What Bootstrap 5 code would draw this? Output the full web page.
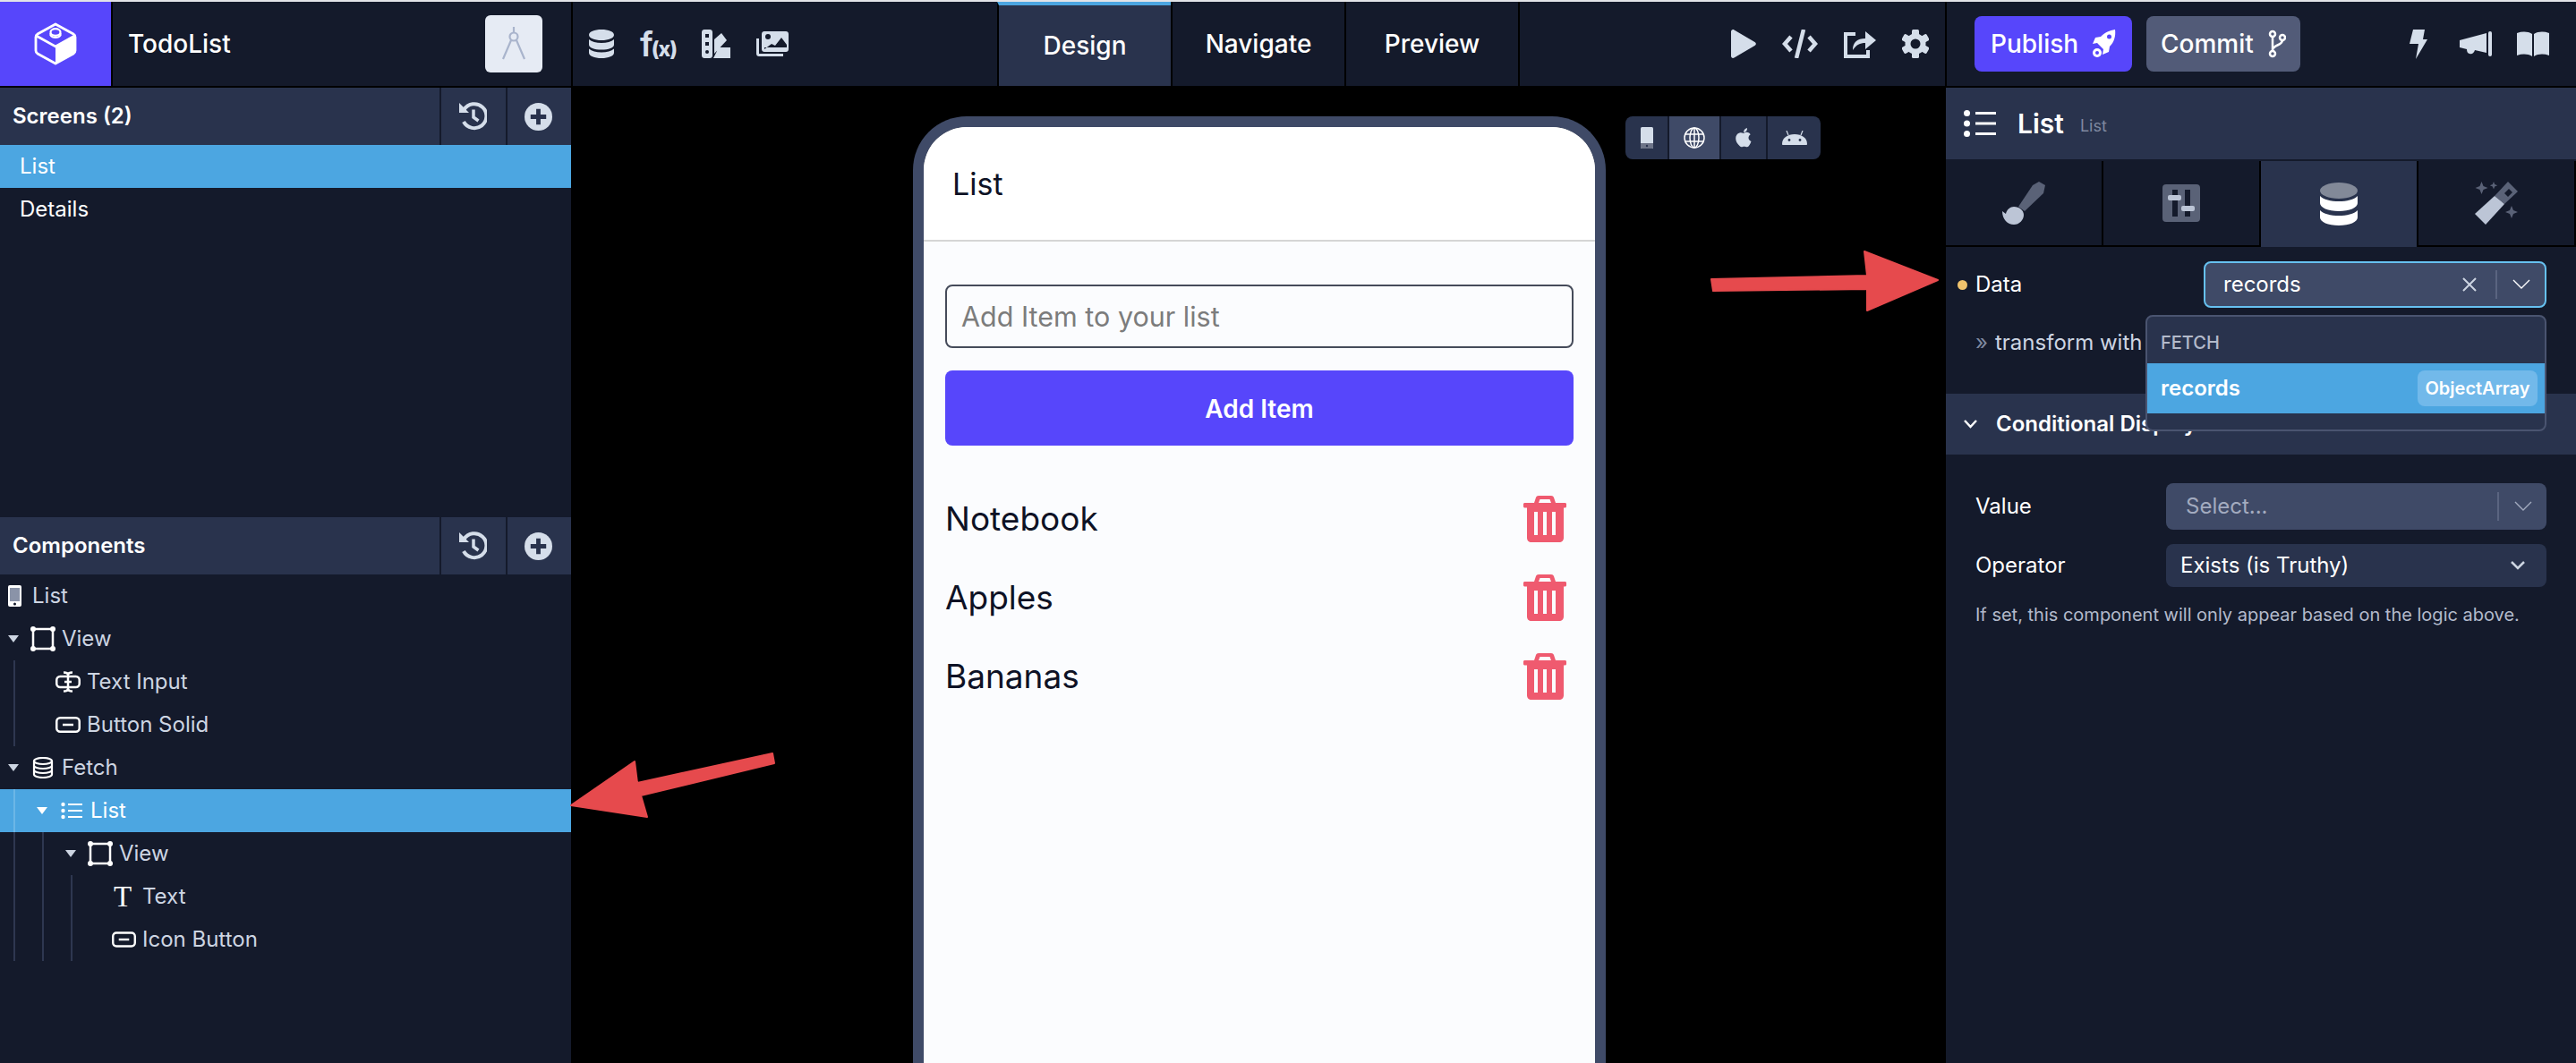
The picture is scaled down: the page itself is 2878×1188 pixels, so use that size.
<!DOCTYPE html>
<html lang="en">
<head>
    <meta charset="UTF-8">
    <title>TodoList</title>
    <link href="https://cdn.jsdelivr.net/npm/bootstrap@5.3.0/dist/css/bootstrap.min.css" rel="stylesheet">
    <style>
        html, body { height: 100%; }
        body { background: #000; color: #fff; font-family: Inter, "Noto Sans", sans-serif; font-size: 24px; overflow: hidden; border-top: 2px solid #e3e4e8; position: relative; }
        svg { display: block; flex: none; }

        /* top bar */
        .topbar { height: 94px; background: #141a2b; }
        .logo-box { width: 124px; background: #5746fb; }
        .project { width: 514px; border-left: 2px solid #000; padding: 0 32px 0 17px; font-size: 28px; font-weight: 500; }
        .compass-btn { width: 64px; height: 64px; background: #e6ebf4; border-radius: 6px; }
        .tool-icons { width: 476px; border-left: 2px solid #000; padding-left: 18px; gap: 29px; color: #d5deea; }
        .fx { font-weight: 700; line-height: 1; width: 40px; white-space: nowrap; }
        .fx b { font-size: 38px; font-weight: 600; letter-spacing: -2px; }
        .fx i { font-size: 23px; font-style: normal; font-weight: 800; letter-spacing: -1px; }
        .mode-tab { width: 194px; border-left: 2px solid #000; font-size: 28px; font-weight: 500; color: #fff; text-decoration: none; }
        .mode-tab:hover { color: #fff; }
        .mode-tab.on { background: #29334d; border-top: 4px solid #4ca6e1; }
        .run-icons { flex: 1; border-left: 2px solid #000; padding-right: 18px; gap: 29px; color: #d5deea; }
        .pub-area { width: 705px; border-left: 2px solid #000; padding: 0 30px 0 31px; color: #d5deea; }
        .top-btn { height: 62px; border: 0; border-radius: 8px; color: #fff; font-size: 28px; font-weight: 500; padding: 0 18px; margin-right: 16px; }
        .btn-pub { width: 176px; background: #5746fb; }
        .btn-com { width: 172px; background: #525b78; padding: 0 16px; }
        .btn-pub:hover { background: #5746fb; color: #fff; }
        .btn-com:hover { background: #525b78; color: #fff; }
        .side-tools { gap: 28px; }
        .bolt-gap { margin-right: 8px; }

        /* main columns */
        .workspace { margin-top: 2px; height: 1090px; }
        .left-col { width: 638px; background: #141a2b; }
        .screens-part { height: 480px; }
        .pane-head { height: 64px; background: #29334d; font-weight: 600; padding-left: 14px; }
        .pane-btn { width: 74px; height: 64px; border-left: 2px solid #141a2b; color: #d5deea; padding-right: 2px; }
        .pane-btn.last { width: 73px; }
        .screen-list .list-group-item { height: 48px; background: transparent; border: 0; border-radius: 0; color: #fff; padding: 0 0 0 22px; display: flex; align-items: center; }
        .screen-list .list-group-item.active { background: #4ca6e1; }

        .tree-row { height: 48px; position: relative; color: #cdd5e2; }
        .tree-row.sel { background: #4ca6e1; color: #fff; }
        .guide { position: absolute; top: 0; bottom: 0; width: 2px; background: #2e3750; }
        .sel .guide { background: #6cb6e6; }
        .g1 { left: 15px; } .g2 { left: 47px; } .g3 { left: 79px; }
        .dp0 { padding-left: 9px; } .dp1 { padding-left: 41px; } .dp2 { padding-left: 73px; }
        .lf1 { padding-left: 62px; } .lf2 { padding-left: 125px; }
        .caret-mark { margin-right: 13px; }
        .tree-ico { margin-right: 7px; color: #fff; }
        .serif-t { font-family: "Liberation Serif", serif; font-size: 33px; line-height: 1; width: 27px; padding-left: 2px; color: #fff; margin-right: 7px; }

        .canvas { width: 1536px; padding: 32px 0 0 2px; }
        .phone { width: 774px; height: 1100px; border: 12px solid #3f4a67; border-bottom: 0; border-radius: 60px 60px 0 0; position: relative; }
        .phone-in { height: 100%; background: #fbfcfe; border-radius: 48px 48px 0 0; overflow: hidden; color: #0e1225; }
        .phone-head { height: 128px; background: #fff; border-bottom: 2px solid #d5d5d5; padding-left: 32px; font-size: 34px; }
        .phone-body { padding: 48px 24px 0; }
        .phone-input { height: 71px; border: 2px solid #454b5a; border-radius: 8px; background: transparent; font-size: 30.500px; padding: 0 16px; color: #333; }
        .phone-input::placeholder { color: #7c7c7c; }
        .phone-input:focus { background: transparent; border-color: #454b5a; box-shadow: none; }
        .add-btn { height: 84px; margin-top: 25px; padding-top: 8px; background: #5746fb; border: 0; border-radius: 8px; color: #fff; font-size: 28px; font-weight: 600; }
        .add-btn:hover { background: #5746fb; color: #fff; }
        .todo-row { height: 88px; font-size: 37px; padding-right: 8px; }
        .todo-first { margin-top: 38px; }
        .trash-ico { color: #ef5a6f; }
        .platform { position: absolute; left: calc(100% + 34px); top: -12px; height: 48px; width: 218px; background: #29334d; border-radius: 8px; overflow: hidden; color: #d5deea; }
        .plat-item { height: 48px; border-left: 2px solid #141a2b; }
        .plat-item.on { background: #3f4a67; color: #fff; }
        .p-a { width: 47px; border-left: 0; } .p-b { width: 58px; } .p-c { width: 52px; } .p-d { width: 61px; }

        .right-col { width: 704px; background: #141a2b; }
        .prop-head { height: 80px; background: #29334d; padding-left: 20px; font-size: 30px; font-weight: 600; }
        .prop-sub { font-size: 18px; font-weight: 400; color: #7f89a0; margin-left: 18px; margin-top: 4px; }
        .prop-tabs { margin-top: 2px; height: 96px; }
        .prop-tab { width: 176px; border-right: 2px solid #000; border-bottom: 2px solid #000; height: 96px; }
        .prop-tab.on { background: #29334d; border-bottom: 0; }
        .prop-form { padding: 16px 33px 0 13px; }
        .prop-form, .cond-body { font-size: 24px; }
        .dot-mark { width: 11px; height: 11px; border-radius: 50%; background: #f0c36d; margin-right: 9px; }
        .data-row { height: 52px; }
        .select-shell { position: relative; height: 52px; background: #3f4a67; border-radius: 8px; color: #fff; }
        .select-data { width: 383px; border: 2px solid #66c1f0; padding-left: 20px; }
        .select-wide { width: 425px; padding-left: 22px; color: #a3abbf; }
        .select-plain { width: 425px; height: 48px; background: #29334d; padding-left: 16px; }
        .sel-sep { width: 2px; height: 32px; background: #5a6480; margin: 0 17px 0 21px; }
        .sel-x { color: #cdd5e2; }
        .transform-row { padding: 23px 0 41px 20px; line-height: 32px; color: #cdd5e2; }
        .transform-row span { color: #7f89a0; margin-right: 8px; }
        .pick-menu { display: block; position: absolute; right: -2px; top: 58px; width: 448px; height: 130px; min-width: 0; margin: 0; padding: 0; background: #29334d; border: 2px solid #4a5470; border-radius: 8px; overflow: hidden; font-size: 24px; color: #fff; z-index: 5; }
        .pick-label { height: 52px; padding: 6px 0 0 15px; font-size: 20px; font-weight: 500; color: #b3bacb; }
        .pick-item { height: 56px; background: #4ca6e1; padding: 0 8px 0 15px; font-weight: 600; color: #fff; }
        .pick-badge { width: 134px; height: 40px; background: #72b9ea; border-radius: 8px; font-size: 20px; font-weight: 600; }
        .cond-head { height: 68px; background: #29334d; padding-left: 20px; font-weight: 600; }
        .cond-head svg { margin-right: 21px; }
        .cond-body { padding: 32px 33px 0; }
        .cond-row { margin-bottom: 16px; }
        .help-line { font-size: 20px; line-height: 30px; color: #b3bacb; white-space: nowrap; }

        .arrows { position: absolute; left: 0; top: -2px; pointer-events: none; z-index: 10; }
    </style>
</head>
<body>

<svg class="d-none">
    <symbol id="i-db" viewBox="0 0 28 32"><path d="M0 6C0 2.500 6 0 14 0s14 2.500 14 6-6 6-14 6S0 9.500 0 6zM0 11c3 2.800 8 4 14 4s11-1.200 14-4v6c0 3.300-6 5.600-14 5.600S0 20.300 0 17zM0 21.500c3 2.800 8 4 14 4s11-1.200 14-4V26c0 3.500-6 6-14 6S0 29.500 0 26z" fill="currentColor"/></symbol>
    <symbol id="i-history" viewBox="0 0 32 32"><path d="M6.500 8.500A13.500 13.500 0 1 1 6 22" fill="none" stroke="currentColor" stroke-width="4"/><path d="M1 1l11 11H1z" fill="currentColor"/><path d="M17 8.500V17l5.500 4" fill="none" stroke="currentColor" stroke-width="3.500"/></symbol>
    <symbol id="i-plus" viewBox="0 0 32 32"><circle cx="16" cy="16" r="16" fill="#d5deea"/><path d="M16 7v18M7 16h18" stroke="#29334d" stroke-width="5"/></symbol>
    <symbol id="i-view" viewBox="0 0 28 28"><rect x="3" y="3" width="22" height="22" fill="none" stroke="currentColor" stroke-width="2.500"/><g fill="currentColor"><circle cx="3" cy="3" r="3"/><circle cx="25" cy="3" r="3"/><circle cx="3" cy="25" r="3"/><circle cx="25" cy="25" r="3"/></g></symbol>
    <symbol id="i-button" viewBox="0 0 28 18"><rect x="1.250" y="1.250" width="25.500" height="15.500" rx="4" fill="none" stroke="currentColor" stroke-width="2.500"/><path d="M8 9h12" stroke="currentColor" stroke-width="2.500"/></symbol>
    <symbol id="i-list" viewBox="0 0 36 30"><g fill="currentColor"><circle cx="3.500" cy="3.500" r="3.500"/><circle cx="3.500" cy="15" r="3.500"/><circle cx="3.500" cy="26.500" r="3.500"/></g><path d="M13 3.500h23M13 15h23M13 26.500h23" stroke="currentColor" stroke-width="3"/></symbol>
    <symbol id="i-caret" viewBox="0 0 12 8"><path d="M0 0h12L6 8z" fill="currentColor"/></symbol>
    <symbol id="i-chev" viewBox="0 0 20 12"><path d="M1 1l9 9 9-9" fill="none" stroke="currentColor" stroke-width="1.400"/></symbol>
    <symbol id="i-trash" viewBox="0 0 48 52"><path d="M0 9.500C0 8.400 1 8 2 8h10l2-6c.4-1.200 1.500-2 3-2h14c1.500 0 2.600.800 3 2l2 6h10c1 0 2 .4 2 1.500V12c0 1-1 1.500-2 1.500h-1V47c0 3-2 5-5 5H9c-3 0-5-2-5-5V13.500H2c-1 0-2-.500-2-1.500zM17 8h14l-1.500-4h-11z" fill="currentColor" fill-rule="evenodd"/><path d="M14 18v26M24 18v26M34 18v26" stroke="#fbfcfe" stroke-width="4"/></symbol>
</svg>

<!-- top bar -->
<header class="topbar d-flex">
    <div class="logo-box d-flex align-items-center justify-content-center">
        <svg width="48" height="48" viewBox="0 0 48 48" fill="none">
            <path d="M24 2L44 13c1.600.9 2 1.700 2 3.500v15c0 1.800-.4 2.600-2 3.500L24 46 4 35c-1.600-.9-2-1.700-2-3.500v-15c0-1.800.4-2.600 2-3.500z" stroke="#fff" stroke-width="2.800" stroke-linejoin="round"/>
            <path d="M2.500 15L24 27l21.500-12" stroke="#fff" stroke-width="2.800"/>
            <path d="M24 27l21-12v17c0 1.500-.5 2.300-2 3L24 46z" fill="#fff"/>
            <ellipse cx="24" cy="11" rx="5.500" ry="3.800" stroke="#fff" stroke-width="2.200"/>
            <path d="M18.500 12v2.500c1 1.600 3.200 2.500 5.500 2.500s4.500-.9 5.500-2.500V12" stroke="#fff" stroke-width="2.200"/>
        </svg>
    </div>
    <div class="project d-flex align-items-center justify-content-between">
        <span>TodoList</span>
        <div class="compass-btn d-flex align-items-center justify-content-center">
            <svg width="28" height="38" viewBox="0 0 28 38" fill="none" stroke="#a9b4cc" stroke-width="2.200"><path d="M14 0v7"/><circle cx="14" cy="11" r="4.500"/><path d="M11 15L2 36M17 15l9 21"/></svg>
        </div>
    </div>
    <div class="tool-icons d-flex align-items-center">
        <svg width="28" height="32"><use href="#i-db"/></svg>
        <div class="fx"><b>f</b><i>(x)</i></div>
        <svg width="32" height="32" viewBox="0 0 32 32" fill="currentColor"><path d="M3 0h6c1.700 0 3 1.300 3 3v26c0 1.700-1.300 3-3 3H3c-1.700 0-3-1.300-3-3V3c0-1.700 1.300-3 3-3z"/><path d="M14 11l8-7 6 8-14 15zM19 20h13v12H13z"/><rect x="4" y="5" width="4" height="4" fill="#141a2b"/><rect x="4" y="14" width="4" height="4" fill="#141a2b"/><circle cx="6" cy="25" r="2" fill="#141a2b"/></svg>
        <svg width="36" height="28" viewBox="0 0 36 28" fill="currentColor"><path d="M0 8h3v17h27v3H3c-1.700 0-3-1.300-3-3z"/><path d="M9 0h24c1.700 0 3 1.300 3 3v17c0 1.700-1.300 3-3 3H9c-1.700 0-3-1.300-3-3V3c0-1.700 1.300-3 3-3z"/><circle cx="13" cy="6" r="3" fill="#141a2b"/><path d="M9 20l8-6 4 2 7-9 6 8v3H9z" fill="#141a2b"/></svg>
    </div>
    <a class="mode-tab on d-flex align-items-center justify-content-center" href="#">Design</a>
    <a class="mode-tab d-flex align-items-center justify-content-center" href="#">Navigate</a>
    <a class="mode-tab d-flex align-items-center justify-content-center" href="#">Preview</a>
    <div class="run-icons d-flex align-items-center justify-content-end">
        <svg width="28" height="32" viewBox="0 0 28 32" fill="currentColor"><path d="M0 2.500C0 .5 1.800-.5 3.500.5l23 13.500c1.800 1 1.800 3 0 4l-23 13.500C1.800 32.500 0 31.500 0 29.500z"/></svg>
        <svg width="40" height="32" viewBox="0 0 40 32" fill="none" stroke="currentColor" stroke-width="4.500"><path d="M10 8l-7 8 7 8M30 8l7 8-7 8"/><path d="M24 0l-8 32"/></svg>
        <svg width="36" height="32" viewBox="0 0 36 32" fill="none"><path d="M13 5H2v25h25v-7" stroke="currentColor" stroke-width="4"/><path d="M10 23c0-9 5-13 14-13V2l12 10-12 10v-7c-6 0-10 2-14 8z" fill="currentColor"/></svg>
        <svg width="30" height="32" viewBox="0 0 30 32" fill="currentColor"><g><rect x="11" y="0" width="8" height="7" rx="1.500"/><rect x="11" y="25" width="8" height="7" rx="1.500"/><rect x="11" y="0" width="8" height="7" rx="1.500" transform="rotate(60 15 16)"/><rect x="11" y="25" width="8" height="7" rx="1.500" transform="rotate(60 15 16)"/><rect x="11" y="0" width="8" height="7" rx="1.500" transform="rotate(-60 15 16)"/><rect x="11" y="25" width="8" height="7" rx="1.500" transform="rotate(-60 15 16)"/></g><circle cx="15" cy="16" r="8.500" fill="none" stroke="currentColor" stroke-width="6"/></svg>
    </div>
    <div class="pub-area d-flex align-items-center">
        <button class="btn top-btn btn-pub d-flex align-items-center justify-content-between" type="button">Publish
            <svg width="26" height="32" viewBox="0 0 26 32" fill="#fff"><path d="M25 0c1 7-1 14-6 19l-1 6-7 3 1-6-7-7-5 1 3-7 6-1C14 3 19 1 25 0z"/><circle cx="18.500" cy="8" r="2.500" fill="#5746fb"/><circle cx="5" cy="26" r="5"/><circle cx="5" cy="26" r="2" fill="#5746fb"/></svg>
        </button>
        <button class="btn top-btn btn-com d-flex align-items-center justify-content-between" type="button">Commit
            <svg width="20" height="32" viewBox="0 0 20 32" fill="none" stroke="#fff" stroke-width="2.500"><circle cx="5" cy="5" r="3"/><circle cx="5" cy="27" r="3"/><circle cx="16" cy="9" r="3"/><path d="M5 8v16M16 12c0 6-11 5-11 11"/></svg>
        </button>
        <div class="side-tools d-flex align-items-center ms-auto">
            <svg class="bolt-gap" width="20" height="33" viewBox="0 0 20 33" fill="currentColor"><path d="M4 0h13l-2 11h5L7 33l3-17H0z"/></svg>
            <svg width="36" height="28" viewBox="0 0 36 28" fill="currentColor"><rect x="32" y="0" width="4" height="28" rx="2"/><path d="M0 10l30-8v22l-13-3c-1 3-3 5-6 4-2-.5-3-2-3-5l-8-2z"/></svg>
            <svg width="36" height="28" viewBox="0 0 36 28" fill="currentColor"><path d="M0 2c6-2 12-2 17 1v25c-5-3-11-3-17-1zM19 3c5-3 11-3 17-1v25c-6-2-12-2-17 1z"/></svg>
        </div>
    </div>
</header>

<div class="workspace d-flex">
    <!-- screens + components -->
    <aside class="left-col">
        <div class="screens-part">
            <div class="pane-head d-flex align-items-center">
                <span class="me-auto">Screens (2)</span>
                <div class="pane-btn d-flex align-items-center justify-content-center"><svg width="32" height="32"><use href="#i-history"/></svg></div>
                <div class="pane-btn last d-flex align-items-center justify-content-center"><svg width="31" height="31"><use href="#i-plus"/></svg></div>
            </div>
            <div class="list-group screen-list">
                <a class="list-group-item active" href="#">List</a>
                <a class="list-group-item" href="#">Details</a>
            </div>
        </div>
        <div class="pane-head d-flex align-items-center">
            <span class="me-auto">Components</span>
            <div class="pane-btn d-flex align-items-center justify-content-center"><svg width="32" height="32"><use href="#i-history"/></svg></div>
            <div class="pane-btn last d-flex align-items-center justify-content-center"><svg width="31" height="31"><use href="#i-plus"/></svg></div>
        </div>
        <div class="tree-row dp0 d-flex align-items-center">
            <svg class="tree-ico me-0" width="15" height="24" viewBox="0 0 15 24"><rect width="15" height="24" rx="2" fill="#fff"/><rect x="2" y="3" width="11" height="15" fill="#8a93a8"/><circle cx="7.500" cy="21" r="1.500" fill="#141a2b"/></svg>
            <span class="ms-2 ps-1">List</span>
        </div>
        <div class="tree-row dp0 d-flex align-items-center">
            <svg class="caret-mark" width="12" height="8"><use href="#i-caret"/></svg>
            <svg class="tree-ico" width="28" height="28"><use href="#i-view"/></svg>
            <span>View</span>
        </div>
        <div class="tree-row lf1 d-flex align-items-center">
            <i class="guide g1"></i>
            <svg class="tree-ico" width="28" height="24" viewBox="0 0 28 24" fill="none" stroke="currentColor" stroke-width="2.500"><rect x="1.250" y="6" width="25.500" height="12" rx="4"/><path d="M9 1.500c3 0 5 1 5 3v15c0 2-2 3-5 3M19 1.500c-3 0-5 1-5 3v15c0 2 2 3 5 3M10 12h8"/></svg>
            <span>Text Input</span>
        </div>
        <div class="tree-row lf1 d-flex align-items-center">
            <i class="guide g1"></i>
            <svg class="tree-ico" width="28" height="18"><use href="#i-button"/></svg>
            <span>Button Solid</span>
        </div>
        <div class="tree-row dp0 d-flex align-items-center">
            <svg class="caret-mark" width="12" height="8"><use href="#i-caret"/></svg>
            <svg class="tree-ico" width="28" height="24" viewBox="0 0 28 24" fill="none" stroke="currentColor" stroke-width="2.200"><ellipse cx="14" cy="4.500" rx="10" ry="3.500"/><path d="M4 4.500v15c0 2 4.500 3.500 10 3.500s10-1.500 10-3.500v-15M4 9.500c0 2 4.500 3.500 10 3.500s10-1.500 10-3.500M4 14.500c0 2 4.500 3.500 10 3.500s10-1.500 10-3.500"/></svg>
            <span>Fetch</span>
        </div>
        <div class="tree-row sel dp1 d-flex align-items-center">
            <i class="guide g1"></i>
            <svg class="caret-mark" width="12" height="8"><use href="#i-caret"/></svg>
            <svg class="tree-ico" width="28" height="20" viewBox="0 0 28 20"><g fill="currentColor"><circle cx="4.500" cy="3" r="2.200"/><circle cx="4.500" cy="10" r="2.200"/><circle cx="4.500" cy="17" r="2.200"/></g><path d="M10 3h16M10 10h16M10 17h16" stroke="currentColor" stroke-width="2.200"/></svg>
            <span>List</span>
        </div>
        <div class="tree-row dp2 d-flex align-items-center">
            <i class="guide g1"></i><i class="guide g2"></i>
            <svg class="caret-mark" width="12" height="8"><use href="#i-caret"/></svg>
            <svg class="tree-ico" width="28" height="28"><use href="#i-view"/></svg>
            <span>View</span>
        </div>
        <div class="tree-row lf2 d-flex align-items-center">
            <i class="guide g1"></i><i class="guide g2"></i><i class="guide g3"></i>
            <span class="serif-t">T</span>
            <span>Text</span>
        </div>
        <div class="tree-row lf2 d-flex align-items-center">
            <i class="guide g1"></i><i class="guide g2"></i><i class="guide g3"></i>
            <svg class="tree-ico" width="27" height="18"><use href="#i-button"/></svg>
            <span>Icon Button</span>
        </div>
    </aside>

    <!-- canvas -->
    <main class="canvas d-flex justify-content-center">
        <div class="phone">
            <div class="phone-in">
                <div class="phone-head d-flex align-items-center">List</div>
                <div class="phone-body">
                    <input class="form-control phone-input" type="text" placeholder="Add Item to your list">
                    <button class="btn add-btn w-100" type="button">Add Item</button>
                    <div class="todo-row todo-first d-flex align-items-center justify-content-between">Notebook <svg class="trash-ico" width="48" height="52"><use href="#i-trash"/></svg></div>
                    <div class="todo-row d-flex align-items-center justify-content-between">Apples <svg class="trash-ico" width="48" height="52"><use href="#i-trash"/></svg></div>
                    <div class="todo-row d-flex align-items-center justify-content-between">Bananas <svg class="trash-ico" width="48" height="52"><use href="#i-trash"/></svg></div>
                </div>
            </div>
            <div class="platform d-flex">
                <div class="plat-item p-a d-flex align-items-center justify-content-center">
                    <svg width="14" height="24" viewBox="0 0 14 24"><rect width="14" height="24" rx="1.500" fill="#d5deea"/><path d="M0 18h14v4.500c0 .8-.7 1.500-1.500 1.500h-11C.7 24 0 23.300 0 22.500z" fill="#6d7488"/><circle cx="7" cy="21" r="1.200" fill="#29334d"/></svg>
                </div>
                <div class="plat-item p-b on d-flex align-items-center justify-content-center">
                    <svg width="24" height="24" viewBox="0 0 24 24" fill="none" stroke="currentColor" stroke-width="1.500"><circle cx="12" cy="12" r="11"/><ellipse cx="12" cy="12" rx="5" ry="11"/><path d="M12 1v22M2 8h20M2 16h20"/></svg>
                </div>
                <div class="plat-item p-c d-flex align-items-center justify-content-center">
                    <svg width="18" height="22" viewBox="0 0 18 22" fill="currentColor"><path d="M9 6c1.500-1 3-1.400 4.500-1 1.500.3 2.500 1.200 3.200 2.200-1.500 1-2.200 2.200-2.200 3.800 0 1.800 1 3.100 3 3.900-.6 2-1.500 3.700-2.700 5.300-1 1.200-2.200 1.300-3.400.8-1.200-.5-2.200-.5-3.400 0-1.200.5-2.300.4-3.300-.8C1.500 17.500.2 14.500.2 11.500.2 8.500 1.800 6 4.500 5.400 6 5 7.500 5.300 9 6z"/><path d="M9 5c0-2.500 1.500-4.500 4-5 .2 2.700-1.300 4.700-4 5z"/></svg>
                </div>
                <div class="plat-item p-d d-flex align-items-center justify-content-center">
                    <svg width="28" height="16" viewBox="0 0 28 16" fill="currentColor"><path d="M0 15C0 8 6 4 14 4s14 4 14 11c0 .5-.3 1-1 1H1c-.7 0-1-.5-1-1z"/><path d="M7 5L5 0M21 5l2-5" stroke="currentColor" stroke-width="1.200"/><circle cx="8" cy="10.500" r="1.400" fill="#29334d"/><circle cx="20" cy="10.500" r="1.400" fill="#29334d"/></svg>
                </div>
            </div>
        </div>
    </main>

    <!-- properties -->
    <aside class="right-col">
        <div class="prop-head d-flex align-items-center">
            <svg class="me-4" width="36" height="30"><use href="#i-list"/></svg>
            <span>List</span><span class="prop-sub">List</span>
        </div>
        <div class="prop-tabs d-flex">
            <div class="prop-tab d-flex align-items-center justify-content-center">
                <svg width="48" height="48" viewBox="0 0 48 48"><path d="M34 4L41 0l7 4-2 9-21 20-7-5z" fill="#5a6277"/><path d="M0 33l4 3c1-5 5-8 9-8 6 0 11 4 11 9 0 6-5 11-11 11-7 0-13-6-13-15z" fill="#bcc5d6"/></svg>
            </div>
            <div class="prop-tab d-flex align-items-center justify-content-center">
                <svg width="42" height="42" viewBox="0 0 42 42"><rect width="42" height="42" rx="4" fill="#5a6277"/><rect x="11" y="6" width="6" height="30" fill="#141a2b"/><rect x="25" y="6" width="6" height="30" fill="#141a2b"/><rect x="6" y="12" width="15" height="6" rx="2" fill="#bcc5d6"/><rect x="21" y="24" width="15" height="6" rx="2" fill="#bcc5d6"/></svg>
            </div>
            <div class="prop-tab on d-flex align-items-center justify-content-center">
                <svg width="42" height="48" viewBox="0 0 42 48"><ellipse cx="21" cy="9" rx="21" ry="9" fill="#828998"/><path d="M0 15c4 4 12 6 21 6s17-2 21-6v8c0 5-9 9-21 9S0 28 0 23z" fill="#fff"/><path d="M0 31c4 4 12 6 21 6s17-2 21-6v8c0 5-9 9-21 9S0 44 0 39z" fill="#fff"/></svg>
            </div>
            <div class="prop-tab d-flex align-items-center justify-content-center">
                <svg width="48" height="48" viewBox="0 0 48 48"><path d="M37 0l11 11-15 14-11-9z" fill="#5a6277"/><path d="M38 8l4 4-5 5-4-4z" fill="#141a2b"/><path d="M22 16l11 9-21 23L0 36z" fill="#bcc5d6"/><path d="M7.500 0l2 5 5 2-5 2-2 5-2-5-5-2 5-2zM21 0l1.200 3 3 1.200-3 1.200L21 8.500l-1.200-3-3-1.200 3-1.200zM41 27l2 5 5 2-5 2-2 5-2-5-5-2 5-2z" fill="#5a6277"/></svg>
            </div>
        </div>
        <div class="prop-form">
            <div class="data-row d-flex align-items-center">
                <span class="dot-mark"></span>
                <span class="me-auto">Data</span>
                <div class="select-shell select-data d-flex align-items-center">
                    <span class="me-auto">records</span>
                    <svg class="sel-x" width="16" height="16" viewBox="0 0 16 16" stroke="currentColor" stroke-width="2"><path d="M1 1l14 14M15 1L1 15"/></svg>
                    <span class="sel-sep"></span>
                    <svg class="me-3" width="20" height="12"><use href="#i-chev"/></svg>
                    <div class="pick-menu">
                        <div class="pick-label d-flex align-items-center">FETCH</div>
                        <div class="pick-item d-flex align-items-center justify-content-between">records <span class="pick-badge d-flex align-items-center justify-content-center">ObjectArray</span></div>
                    </div>
                </div>
            </div>
            <div class="transform-row"><span>&raquo;</span>transform with</div>
        </div>
        <div class="cond-head d-flex align-items-center">
            <svg width="15" height="10" viewBox="0 0 15 10" fill="none" stroke="#fff" stroke-width="2.500"><path d="M1 1l6.500 7L14 1"/></svg>
            <span>Conditional Display</span>
        </div>
        <div class="cond-body">
            <div class="cond-row d-flex align-items-center">
                <span class="me-auto">Value</span>
                <div class="select-shell select-wide d-flex align-items-center">
                    <span class="me-auto">Select...</span>
                    <span class="sel-sep"></span>
                    <svg class="me-3" width="20" height="12"><use href="#i-chev"/></svg>
                </div>
            </div>
            <div class="cond-row d-flex align-items-center">
                <span class="me-auto">Operator</span>
                <div class="select-shell select-plain d-flex align-items-center">
                    <span class="me-auto">Exists (is Truthy)</span>
                    <svg class="me-4" width="16" height="10" viewBox="0 0 16 10" fill="none" stroke="#cdd5e2" stroke-width="2.500"><path d="M1 1l7 7 7-7"/></svg>
                </div>
            </div>
            <div class="help-line">If set, this component will only appear based on the logic above.</div>
        </div>
    </aside>
</div>

<!-- annotation arrows -->
<svg class="arrows" width="2878" height="1188" viewBox="0 0 2878 1188" fill="#e64a4d">
    <path d="M638 900L709 851 712 875 863 842 865 853 716 889 723 913z" stroke="#e64a4d" stroke-width="2" stroke-linejoin="round"/>
    <path d="M2165 313L2083 281 2086 308 1912 312 1914 325 2086 323 2086 347z" stroke="#e64a4d" stroke-width="2" stroke-linejoin="round"/>
</svg>

<script src="https://cdn.jsdelivr.net/npm/bootstrap@5.3.0/dist/js/bootstrap.bundle.min.js"></script>
</body>
</html>
